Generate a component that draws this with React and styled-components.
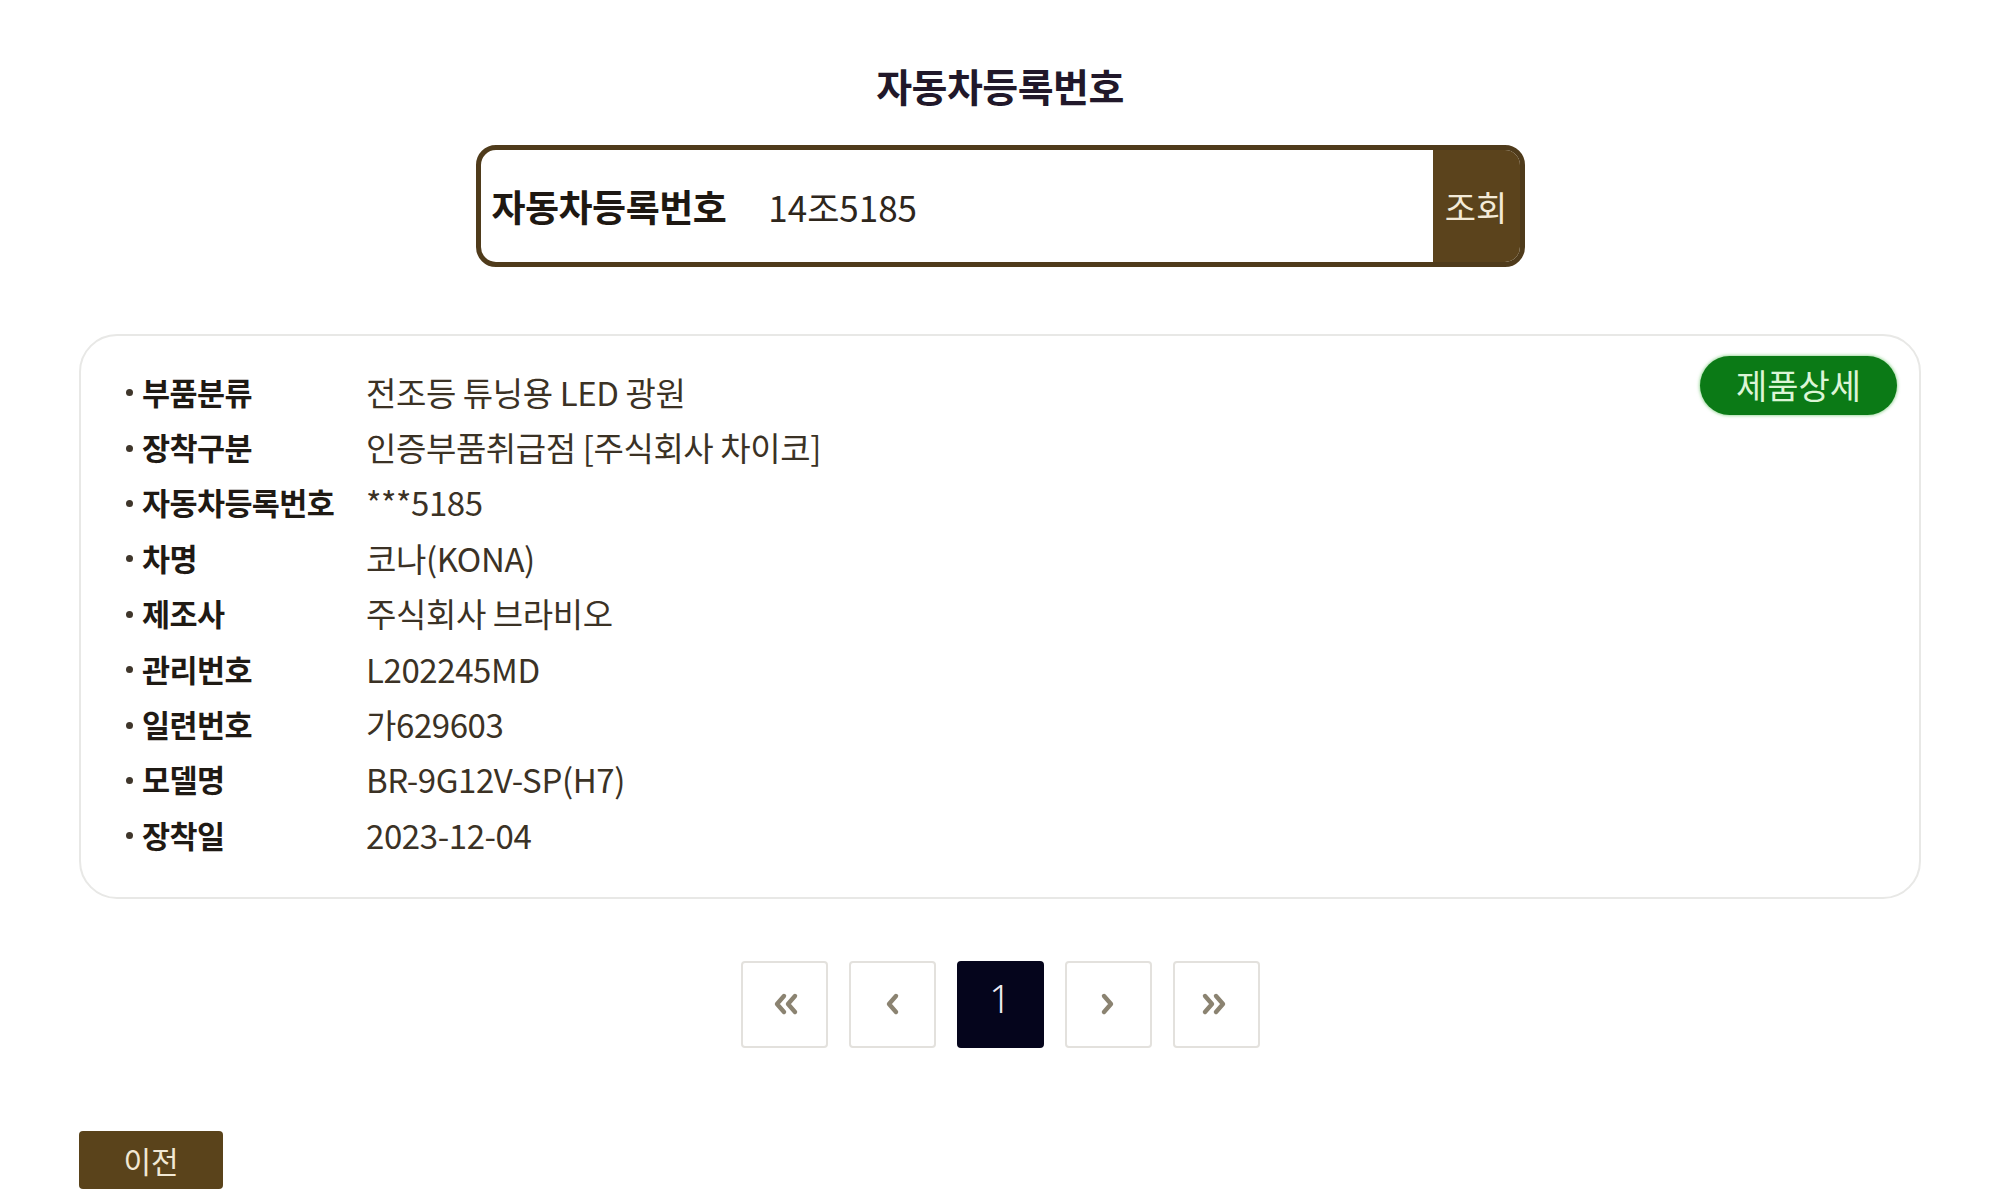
import React, { useState } from 'react'
import styled, { createGlobalStyle } from 'styled-components'

const GlobalStyle = createGlobalStyle`
  html, body {
    margin: 0;
    padding: 0;
    background: #ffffff;
  }
  body {
    font-family: "Noto Sans CJK KR", "Noto Sans", sans-serif;
    color: #2a2118;
  }
`

const rows = [
    { label: '부품분류', value: '전조등 튜닝용 LED 광원' },
    { label: '장착구분', value: '인증부품취급점 [주식회사 차이코]' },
    { label: '자동차등록번호', value: '***5185' },
    { label: '차명', value: '코나(KONA)' },
    { label: '제조사', value: '주식회사 브라비오' },
    { label: '관리번호', value: 'L202245MD' },
    { label: '일련번호', value: '가629603' },
    { label: '모델명', value: 'BR-9G12V-SP(H7)' },
    { label: '장착일', value: '2023-12-04' },
]

const Chevron = ({ dir, double }) => {
    const flip = dir === 'left' ? 'scale(-1,1) translate(-32,0)' : undefined
    return (
        <svg width="32" height="24" viewBox="0 0 32 24">
            <g transform={flip} fill="none" stroke="#8b8371" strokeWidth="4.4" strokeLinecap="round" strokeLinejoin="round">
                {double ? (
                    <>
                        <polyline points="5,4 12,12 5,20" />
                        <polyline points="16,4 23,12 16,20" />
                    </>
                ) : (
                    <polyline points="12,4 19,12 12,20" />
                )}
            </g>
        </svg>
    )
}

const App = () => {
    const [plate, setPlate] = useState('14조5185')
    const [page, setPage] = useState(1)

    return (
        <Page>
            <GlobalStyle />
            <Title>자동차등록번호</Title>

            <SearchBox>
                <SearchLabel>자동차등록번호</SearchLabel>
                <SearchInput value={plate} onChange={(e) => setPlate(e.target.value)} />
                <SearchButton>조회</SearchButton>
            </SearchBox>

            <Card>
                <DetailButton>제품상세</DetailButton>
                <InfoList>
                    {rows.map((row) => (
                        <InfoRow key={row.label}>
                            <Label>{row.label}</Label>
                            <Value>{row.value}</Value>
                        </InfoRow>
                    ))}
                </InfoList>
            </Card>

            <Pager>
                <PageBtn onClick={() => setPage(1)}><Chevron dir="left" double /></PageBtn>
                <PageBtn onClick={() => setPage(1)}><Chevron dir="left" /></PageBtn>
                <PageBtn active={page === 1}>1</PageBtn>
                <PageBtn onClick={() => setPage(1)}><Chevron dir="right" /></PageBtn>
                <PageBtn onClick={() => setPage(1)}><Chevron dir="right" double /></PageBtn>
            </Pager>

            <Footer>
                <BackButton>이전</BackButton>
            </Footer>
        </Page>
    )
}

const Page = styled.div`
    padding: 64px 79px 0;
    display: flex;
    flex-direction: column;
    align-items: center;
`

const Title = styled.h1`
    margin: 0;
    font-size: 39px;
    line-height: 42px;
    font-weight: 700;
    color: #21182a;
    letter-spacing: -0.5px;
`

const SearchBox = styled.div`
    margin-top: 39px;
    width: 1049px;
    height: 122px;
    box-sizing: border-box;
    border: 5px solid #4f3b1b;
    border-radius: 20px;
    display: flex;
    align-items: center;
    overflow: hidden;
    padding-left: 11px;
`

const SearchLabel = styled.span`
    font-size: 37px;
    font-weight: 700;
    color: #1e1812;
    letter-spacing: -0.5px;
    white-space: nowrap;
`

const SearchInput = styled.input`
    flex: 1;
    margin-left: 42px;
    border: none;
    outline: none;
    background: transparent;
    font-family: "Noto Sans CJK KR", "Noto Sans", sans-serif;
    font-size: 35px;
    color: #2e261c;
    padding: 0;
`

const SearchButton = styled.button`
    align-self: stretch;
    width: 87px;
    border: none;
    background: #5b431c;
    color: #f3ead8;
    font-family: "Noto Sans CJK KR", "Noto Sans", sans-serif;
    font-size: 34px;
    padding: 0;
    cursor: pointer;
`

const Card = styled.div`
    position: relative;
    margin-top: 67px;
    align-self: stretch;
    box-sizing: border-box;
    border: 2px solid #e8e8e6;
    border-radius: 38px;
    padding: 28px 40px 34px 45px;
`

const DetailButton = styled.button`
    position: absolute;
    top: 20px;
    right: 22px;
    width: 197px;
    height: 59px;
    border: none;
    border-radius: 30px;
    background: #0b7a16;
    box-shadow: 0 0 3px 1px rgba(90, 190, 90, 0.55);
    color: #dcf5d6;
    font-family: "Noto Sans CJK KR", "Noto Sans", sans-serif;
    font-size: 34px;
    padding: 0 0 3px;
    cursor: pointer;
`

const InfoList = styled.ul`
    list-style: none;
    margin: 0;
    padding: 0;
`

const InfoRow = styled.li`
    display: flex;
    align-items: center;
    height: 55.4px;
`

const Label = styled.span`
    width: 240px;
    flex-shrink: 0;
    display: flex;
    align-items: center;
    font-size: 30.5px;
    font-weight: 700;
    color: #1f1a14;
    letter-spacing: -0.6px;
    white-space: nowrap;

    &::before {
        content: '';
        width: 7px;
        height: 7px;
        border-radius: 50%;
        background: #3f362b;
        margin-right: 9px;
        margin-top: 2px;
    }
`

const Value = styled.span`
    font-size: 33px;
    color: #3b3225;
    letter-spacing: -0.4px;
    white-space: nowrap;
`

const Pager = styled.div`
    margin-top: 62px;
    display: flex;
    gap: 21px;
`

const PageBtn = styled.button`
    width: 87px;
    height: 87px;
    box-sizing: border-box;
    border: 2px solid ${(p) => (p.active ? '#05051c' : '#e3e1dd')};
    border-radius: 4px;
    background: ${(p) => (p.active ? '#05051c' : '#ffffff')};
    color: #ecebf4;
    font-family: "Noto Sans", sans-serif;
    font-size: 38px;
    font-weight: 300;
    display: flex;
    align-items: center;
    justify-content: center;
    padding: 0 0 12px;
    cursor: pointer;

    svg {
        margin-top: 12px;
    }
`

const Footer = styled.div`
    align-self: stretch;
    margin-top: 83px;
`

const BackButton = styled.button`
    width: 144px;
    height: 58px;
    border: none;
    border-radius: 4px;
    background: #5a431b;
    color: #f1e8d4;
    font-family: "Noto Sans CJK KR", "Noto Sans", sans-serif;
    font-size: 30px;
    padding: 0;
    cursor: pointer;
`

export default App
